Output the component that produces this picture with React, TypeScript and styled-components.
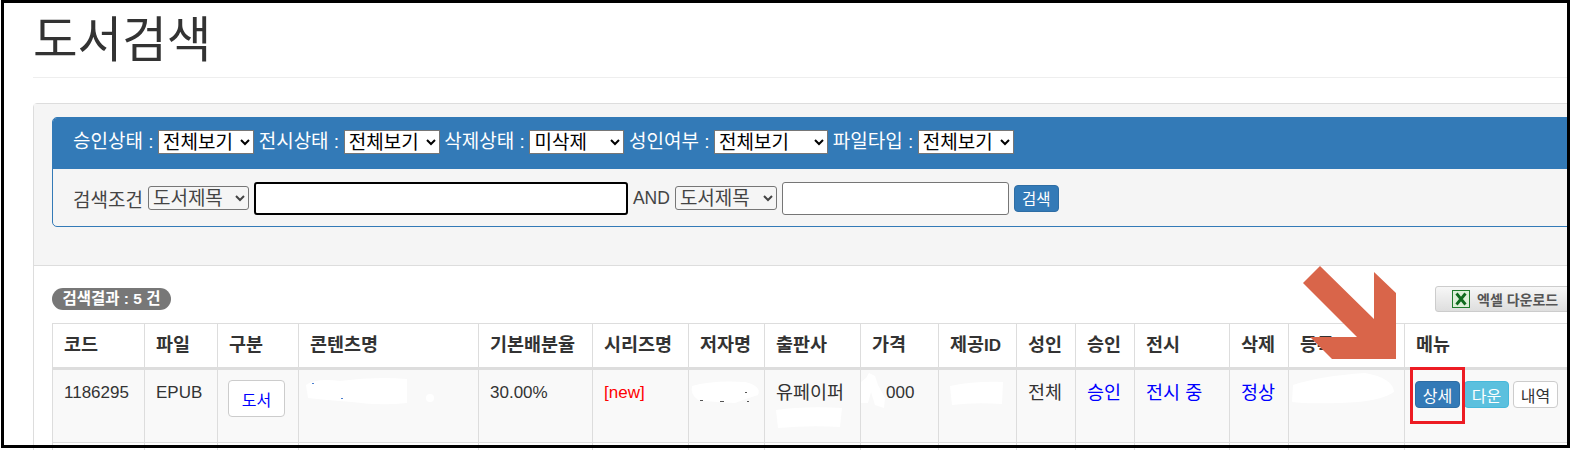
import React from "react";
import styled, { createGlobalStyle } from "styled-components";

const Global = createGlobalStyle`
  html, body { margin: 0; padding: 0; background: #fff; }
  body { font-family: "Liberation Sans", "Noto Sans CJK KR", Arial, sans-serif; font-size: 17px; color: #333; }
`;

const Page = styled.div`
  position: relative;
  width: 1570px;
  height: 450px;
  overflow: hidden;
  background: #fff;
  padding-left: 33px;
  box-sizing: border-box;
`;

const Header = styled.div`
  width: 1537px;
  height: 78px;
  box-sizing: border-box;
  border-bottom: 1px solid #eee;
  margin-bottom: 25px;
  padding-top: 10px;
`;

const Title = styled.h1`
  margin: 0;
  font-size: 48.5px;
  line-height: 60px;
  font-weight: 400;
  color: #333;
`;

const Card = styled.div`
  width: 1600px;
  border: 1px solid #ddd;
  border-radius: 4px 0 0 0;
  height: 400px;
  box-sizing: border-box;
`;

const Well = styled.div`
  background: #f5f5f5;
  border-bottom: 1px solid #ddd;
  padding: 13px 0 38px 18px;
  height: 162px;
  box-sizing: border-box;
`;

const SearchPanel = styled.div`
  border: 1px solid #337ab7;
  border-radius: 5px;
  height: 110px;
  box-sizing: border-box;
  overflow: hidden;
`;

const FilterBar = styled.div`
  background: #337ab7;
  height: 51px;
  padding: 12px 0 0 20px;
  box-sizing: border-box;
  display: flex;
  align-items: flex-start;
  gap: 4.6px;
  color: #fff;
  font-size: 19px;
`;

const FilterLabel = styled.span`
  line-height: 24px;
  white-space: nowrap;
`;

const FilterSelect = styled.select<{ $w: number }>`
  width: ${(p) => p.$w}px;
  height: 24px;
  font: 19px "Liberation Sans", "Noto Sans CJK KR", sans-serif;
  color: #000;
  background: #fff;
  border: 1px solid #767676;
  border-radius: 0;
  padding: 0;
`;

const QueryBar = styled.div`
  height: 58px;
  padding: 0 0 0 20px;
  box-sizing: border-box;
  display: flex;
  align-items: center;
  gap: 5px;
  color: #444;
  font-size: 19px;
`;

const AndLabel = styled.span`
  font-size: 17.5px;
`;

const QuerySelect = styled.select<{ $w: number }>`
  width: ${(p) => p.$w}px;
  height: 24px;
  font: 19px "Liberation Sans", "Noto Sans CJK KR", sans-serif;
  color: #444;
  background: #f5f5f5;
  border: 1px solid #767676;
  border-radius: 3px;
  padding: 0;
`;

const QueryInput = styled.input<{ $w: number; $focused?: boolean }>`
  width: ${(p) => p.$w}px;
  height: 33px;
  box-sizing: border-box;
  background: #fff;
  border: ${(p) => (p.$focused ? "2px solid #000" : "1px solid #767676")};
  border-radius: 3px;
  padding: 0;
  outline: none;
`;

const SearchButton = styled.button`
  width: 45px;
  height: 27px;
  border: 1px solid #2e6da4;
  border-radius: 4px;
  background: #337ab7;
  color: #fff;
  font: 15.5px "Liberation Sans", "Noto Sans CJK KR", sans-serif;
  padding: 0;
`;

const Results = styled.div`
  padding: 20px 0 0 18px;
`;

const ResultBar = styled.div`
  display: flex;
  justify-content: space-between;
  align-items: center;
  width: 1546px;
  height: 26px;
  margin-bottom: 11px;
`;

const CountBadge = styled.span`
  width: 119px;
  height: 22px;
  border-radius: 11px;
  background: #777;
  color: #fff;
  font-size: 15.5px;
  font-weight: 700;
  line-height: 22px;
  text-align: center;
  white-space: nowrap;
`;

const ExcelButton = styled.button`
  width: 163px;
  height: 26px;
  border: 1px solid #ccc;
  border-radius: 3px;
  background: linear-gradient(#f7f7f7, #dedede);
  color: #555;
  font: 700 14px "Liberation Sans", "Noto Sans CJK KR", sans-serif;
  display: flex;
  align-items: center;
  gap: 7px;
  padding: 0 0 0 16px;
  box-sizing: border-box;
  white-space: nowrap;
`;

const Table = styled.table`
  border-collapse: collapse;
  table-layout: fixed;
  width: 1546px;
`;

const Head = styled.th`
  height: 45px;
  padding: 0 11px 5px;
  box-sizing: border-box;
  border: 1px solid #ddd;
  border-bottom: 3px solid #ddd;
  text-align: left;
  font-size: 18.5px;
  font-weight: 700;
  color: #333;
  white-space: nowrap;
`;

const LatinRun = styled.span`
  font-size: 17px;
`;

const Cell = styled.td<{ $tone?: "blue" | "red"; $indent?: number; $ko?: boolean }>`
  height: 74px;
  padding: 9px 11px 0 ${(p) => p.$indent ?? 11}px;
  box-sizing: border-box;
  border: 1px solid #ddd;
  vertical-align: top;
  line-height: 27px;
  white-space: nowrap;
  font-size: ${(p) => (p.$ko ? "18.5px" : "17px")};
  color: ${(p) => (p.$tone === "blue" ? "#00f" : p.$tone === "red" ? "#f00" : "#333")};
`;

const DataRow = styled.tr<{ $striped?: boolean }>`
  background: ${(p) => (p.$striped ? "#f9f9f9" : "#fff")};
`;

const TypeButton = styled.button`
  width: 57px;
  height: 37px;
  margin-top: 1px;
  border: 1px solid #ccc;
  border-radius: 4px;
  background: #fff;
  color: #00f;
  font: 16px "Liberation Sans", "Noto Sans CJK KR", sans-serif;
  padding: 0;
`;

const MenuGroup = styled.div`
  display: flex;
  gap: 4px;
  margin-top: 2px;
`;

const tones = {
  primary: "background:#337ab7;border-color:#2e6da4;color:#fff;",
  info: "background:#5bc0de;border-color:#46b8da;color:#fff;",
  plain: "background:#fff;border-color:#ccc;color:#333;",
};

const MenuButton = styled.button<{ $tone: keyof typeof tones }>`
  width: 45px;
  height: 27px;
  border: 1px solid;
  border-radius: 4px;
  font: 16px "Liberation Sans", "Noto Sans CJK KR", sans-serif;
  padding: 0;
  ${(p) => tones[p.$tone]}
`;

const Annotations = styled.svg`
  position: absolute;
  left: 0;
  top: 0;
  width: 1570px;
  height: 450px;
  pointer-events: none;
`;

const Highlight = styled.div`
  position: absolute;
  left: 1410px;
  top: 367px;
  width: 55px;
  height: 57px;
  box-sizing: border-box;
  border: 3px solid #ed1c24;
`;

const ScreenFrame = styled.div`
  position: absolute;
  left: 1px;
  top: 0;
  width: 1569px;
  height: 448px;
  box-sizing: border-box;
  border: 3px solid #000;
  pointer-events: none;
`;

const columns: [React.ReactNode, number][] = [
  ["코드", 92], ["파일", 73], ["구분", 81], ["콘텐츠명", 180], ["기본배분율", 114],
  ["시리즈명", 96], ["저자명", 76], ["출판사", 96], ["가격", 78], [<>제공<LatinRun>ID</LatinRun></>, 78],
  ["성인", 59], ["승인", 59], ["전시", 95], ["삭제", 59], ["등록", 116], ["메뉴", 194],
];

const ExcelIcon = () => (
  <svg width="18" height="18" viewBox="0 0 18 18">
    <rect x="0.5" y="0.5" width="17" height="17" fill="#dcefd8" stroke="#1d7a2a" />
    <path d="M4.5 3.5 L13.5 14.5 M13.5 3.5 L4.5 14.5" stroke="#0f6b1d" strokeWidth="2.8" fill="none" />
  </svg>
);

export default function App() {
  return (
    <>
      <Global />
      <Page>
        <Header>
          <Title>도서검색</Title>
        </Header>
        <Card>
          <Well>
            <SearchPanel>
              <FilterBar>
                <FilterLabel>승인상태 :</FilterLabel>
                <FilterSelect $w={96}><option>전체보기</option></FilterSelect>
                <FilterLabel>전시상태 :</FilterLabel>
                <FilterSelect $w={96}><option>전체보기</option></FilterSelect>
                <FilterLabel>삭제상태 :</FilterLabel>
                <FilterSelect $w={95}><option>미삭제</option></FilterSelect>
                <FilterLabel>성인여부 :</FilterLabel>
                <FilterSelect $w={114}><option>전체보기</option></FilterSelect>
                <FilterLabel>파일타입 :</FilterLabel>
                <FilterSelect $w={96}><option>전체보기</option></FilterSelect>
              </FilterBar>
              <QueryBar>
                <span>검색조건</span>
                <QuerySelect $w={101}><option>도서제목</option></QuerySelect>
                <QueryInput $w={374} $focused />
                <AndLabel>AND</AndLabel>
                <QuerySelect $w={102}><option>도서제목</option></QuerySelect>
                <QueryInput $w={227} />
                <SearchButton>검색</SearchButton>
              </QueryBar>
            </SearchPanel>
          </Well>
          <Results>
            <ResultBar>
              <CountBadge>검색결과 : 5 건</CountBadge>
              <ExcelButton><ExcelIcon />엑셀 다운로드</ExcelButton>
            </ResultBar>
            <Table>
              <colgroup>
                {columns.map(([, w], i) => <col key={i} width={w} />)}
              </colgroup>
              <thead>
                <tr>{columns.map(([name], i) => <Head key={i}>{name}</Head>)}</tr>
              </thead>
              <tbody>
                <DataRow $striped>
                  <Cell>1186295</Cell>
                  <Cell>EPUB</Cell>
                  <Cell $indent={10}><TypeButton>도서</TypeButton></Cell>
                  <Cell />
                  <Cell>30.00%</Cell>
                  <Cell $tone="red">[new]</Cell>
                  <Cell />
                  <Cell $ko>유페이퍼</Cell>
                  <Cell $indent={25}>000</Cell>
                  <Cell />
                  <Cell $ko>전체</Cell>
                  <Cell $ko $tone="blue">승인</Cell>
                  <Cell $ko $tone="blue">전시 중</Cell>
                  <Cell $ko $tone="blue">정상</Cell>
                  <Cell />
                  <Cell $indent={10}>
                    <MenuGroup>
                      <MenuButton $tone="primary">상세</MenuButton>
                      <MenuButton $tone="info">다운</MenuButton>
                      <MenuButton $tone="plain">내역</MenuButton>
                    </MenuGroup>
                  </Cell>
                </DataRow>
                <DataRow>
                  {columns.map((_, i) => <Cell key={i} />)}
                </DataRow>
              </tbody>
            </Table>
          </Results>
        </Card>
        <Annotations viewBox="0 0 1570 450">
          <g fill="#fff">
            <path d="M306 385 Q316 378 340 381 Q375 376 407 379 L407 403 Q380 406 352 402 Q325 400 308 398 Z" />
            <circle cx="430" cy="398" r="4" />
            <path d="M692 386 Q712 380 745 382 Q762 386 758 395 Q745 399 735 403 Q712 402 698 400 Q690 394 692 386 Z" />
            <path d="M776 410 Q805 406 842 408 L840 427 Q810 425 778 428 Z" />
            <path d="M861 382 L866 378 L869 373 L875 376 L878 385 L885 398 L884 408 L875 405 L871 392 L868 403 L861 403 Z" />
            <path d="M950 386 Q975 381 1003 382 L1002 404 Q975 402 952 405 Z" />
            <path d="M1293 385 Q1320 376 1365 373 Q1393 378 1394 392 Q1380 402 1340 403 Q1305 404 1292 402 Z" />
          </g>
          <g fill="#555">
            <rect x="700" y="400" width="3" height="1" />
            <rect x="720" y="401" width="4" height="1" />
            <rect x="745" y="392" width="2" height="1" />
            <rect x="747" y="401" width="2" height="1" />
          </g>
          <g fill="#4a7fd0">
            <rect x="312" y="383" width="2" height="1" />
            <rect x="341" y="398" width="2" height="1" />
          </g>
          <path d="M1320 266 L1303 283 L1357 337 L1310 337 L1332 359 L1396 359 L1396 293 L1374 272 L1374 319 Z" fill="#d9654a" />
        </Annotations>
        <Highlight />
        <ScreenFrame />
      </Page>
    </>
  );
}
